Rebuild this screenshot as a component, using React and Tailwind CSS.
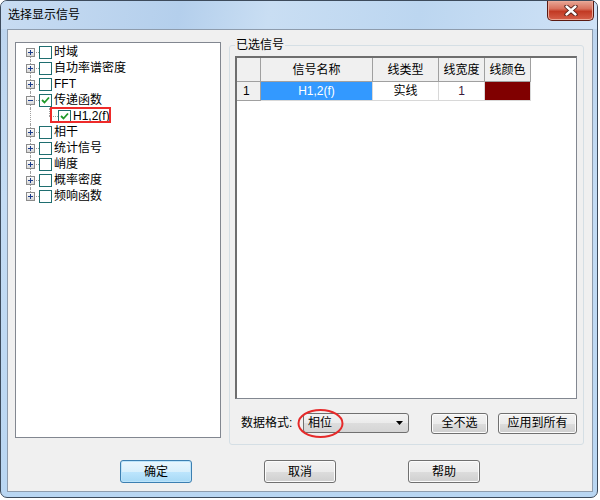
import React from 'react';

const FONT = "font-['Liberation_Sans','Noto_Sans_CJK_SC',sans-serif]";
const DOT = 'border-dotted border-[#a0a0a0]';

const tree = [
  { label: '时域' },
  { label: '自功率谱密度' },
  { label: 'FFT' },
  { label: '传递函数', open: true, checked: true, children: [{ label: 'H1,2(f)', checked: true, marked: true }] },
  { label: '相干' },
  { label: '统计信号' },
  { label: '峭度' },
  { label: '概率密度' },
  { label: '频响函数' },
];

const Expander = ({ open }) => (
  <svg className="absolute left-[5px] top-[4px]" width="9" height="9" viewBox="0 0 9 9">
    <defs>
      <linearGradient id="exg" x1="0" y1="0" x2="0" y2="1">
        <stop offset="0" stopColor="#ffffff" />
        <stop offset="1" stopColor="#d4d4d4" />
      </linearGradient>
    </defs>
    <rect x="0.5" y="0.5" width="8" height="8" fill="url(#exg)" stroke="#8c8c8c" />
    <line x1="2" y1="4.5" x2="7" y2="4.5" stroke="#1c3c8c" />
    {!open && <line x1="4.5" y1="2" x2="4.5" y2="7" stroke="#1c3c8c" />}
  </svg>
);

const Check = ({ checked }) => (
  <div className="w-[13px] h-[13px] shrink-0 border border-[#1f6e70] bg-white flex items-center justify-center">
    {checked && (
      <svg width="9" height="8" viewBox="0 0 9 8">
        <polyline points="1,4 3.5,6.5 8,1.5" fill="none" stroke="#1f9a2a" strokeWidth="1.8" />
      </svg>
    )}
  </div>
);

// one row of the tree: gutter with dotted lines, checkbox, label
const TreeRow = ({ item, first, last }) => (
  <>
    <div className="flex items-center h-[16px]">
      <div className="relative w-[18px] h-full shrink-0">
        {!first && <div className={`absolute left-[9px] top-0 h-[8px] border-l ${DOT}`} />}
        {!last && <div className={`absolute left-[9px] top-[8px] bottom-0 border-l ${DOT}`} />}
        <div className={`absolute left-[9px] right-0 top-[8px] border-t ${DOT}`} />
        <Expander open={item.open} />
      </div>
      <Check checked={item.checked} />
      <span className="ml-[2px] text-[12px] leading-[16px] text-black whitespace-nowrap">{item.label}</span>
    </div>
    {item.open &&
      item.children.map((c, i) => (
        <div key={i} className="relative flex items-center h-[16px]">
          <div className="relative w-[18px] h-full shrink-0">
            {!last && <div className={`absolute left-[9px] top-0 bottom-0 border-l ${DOT}`} />}
          </div>
          <div className="relative w-[19px] h-full shrink-0">
            <div className={`absolute left-[10px] top-0 h-[8px] border-l ${DOT}`} />
            <div className={`absolute left-[10px] right-0 top-[8px] border-t ${DOT}`} />
          </div>
          <Check checked={c.checked} />
          <span className="ml-[2px] text-[12px] leading-[16px] text-black whitespace-nowrap">{c.label}</span>
          {c.marked && (
            <div className="absolute left-[29px] top-[-1px] w-[61px] h-[16px] border-2 border-[#ee2a2a]" />
          )}
        </div>
      ))}
  </>
);

const cols = [
  { w: 'w-[24px]', head: '' },
  { w: 'w-[112px]', head: '信号名称' },
  { w: 'w-[66px]', head: '线类型' },
  { w: 'w-[46px]', head: '线宽度' },
  { w: 'w-[46px]', head: '线颜色' },
];

const Button = ({ children, className = '', primary }) => (
  <div
    className={`h-[21px] flex items-center justify-center rounded-[3px] border text-[12px] text-black ${
      primary
        ? 'border-[#3c7fb1] bg-[linear-gradient(to_bottom,#eaf6fd_0%,#d9f0fc_50%,#bee6fd_50%,#a7d9f5_100%)] shadow-[inset_0_0_0_1px_#bde4fa]'
        : 'border-[#707070] bg-[linear-gradient(to_bottom,#f2f2f2_0%,#ebebeb_50%,#dddddd_50%,#cfcfcf_100%)] shadow-[inset_0_0_0_1px_#fcfcfc]'
    } ${className}`}
  >
    {children}
  </div>
);

export default function App() {
  return (
    <div className={`w-[600px] h-[500px] bg-white overflow-hidden ${FONT}`}>
      <div className="w-[598px] h-[498px] flex flex-col rounded-[7px] border border-[#3d4b5c] bg-[linear-gradient(to_bottom,#bcd4ee,#c4dcf4_40%,#b9d6f2)]">
        {/* title bar */}
        <div className="h-[28px] flex items-start shrink-0 rounded-t-[6px] bg-[linear-gradient(100deg,#c8dcf2_0%,#b4cfec_30%,#c9def3_45%,#bcd6f0_70%,#cfe2f6_100%)]">
          <span className="ml-[7px] mt-[6px] text-[12px] leading-[16px] text-black">选择显示信号</span>
          <div className="ml-auto mr-[3px] w-[47px] h-[20px] rounded-b-[5px] border border-t-0 border-[#5a1a12] flex items-center justify-center bg-[linear-gradient(to_bottom,#e8a796_0%,#d9725e_40%,#c23a24_55%,#d6604a_100%)] shadow-[inset_0_0_0_1px_#eba897]">
            <svg width="14" height="11" viewBox="0 0 14 11">
              <path d="M2.5 1.5 L11.5 9.5 M11.5 1.5 L2.5 9.5" stroke="#4a1a14" strokeWidth="4.2" strokeLinecap="round" />
              <path d="M2.5 1.5 L11.5 9.5 M11.5 1.5 L2.5 9.5" stroke="#ffffff" strokeWidth="2.4" strokeLinecap="round" />
            </svg>
          </div>
        </div>

        {/* client area */}
        <div className="flex-1 ml-[6px] mr-[4px] mb-[5px] border border-[#8e9cad] bg-[#f0f0f0] flex flex-col pt-[8px]">
          <div className="flex items-start">
            {/* tree */}
            <div className="ml-[7px] mt-[4px] w-[206px] h-[396px] border border-[#828790] bg-white pt-[1px] pl-[5px] shrink-0">
              {tree.map((it, i) => (
                <TreeRow key={i} item={it} first={i === 0} last={i === tree.length - 1} />
              ))}
            </div>

            {/* selected signals group */}
            <fieldset className="ml-[8px] w-[355px] h-[407px] border border-[#d5dfe5] rounded-[3px] px-[5px] pt-[4px] shrink-0 min-w-0">
              <legend className="ml-0 px-[1px] text-[12px] leading-[14px] text-black">已选信号</legend>
              <div className="w-[342px] h-[343px] border border-[#828790] border-t-2 border-l-2 border-t-[#6e6e6e] border-l-[#6e6e6e] bg-white">
                <div className="flex h-[24px]">
                  {cols.map((c, i) => (
                    <div
                      key={i}
                      className={`${c.w} h-full shrink-0 bg-[#f0f0f0] border-r border-b border-[#a0a0a0] flex items-center justify-center text-[12px] text-black`}
                    >
                      {c.head}
                    </div>
                  ))}
                </div>
                <div className="flex h-[19px] text-[12px]">
                  <div className="w-[24px] h-full shrink-0 bg-[#f0f0f0] border-r border-b border-[#a0a0a0] flex items-center pl-[6px] text-black">
                    1
                  </div>
                  <div className="w-[112px] h-full shrink-0 bg-[#3399ff] border-r border-b border-[#d8d8d8] flex items-center justify-center text-white">
                    H1,2(f)
                  </div>
                  <div className="w-[66px] h-full shrink-0 border-r border-b border-[#d8d8d8] flex items-center justify-center text-black">
                    实线
                  </div>
                  <div className="w-[46px] h-full shrink-0 border-r border-b border-[#d8d8d8] flex items-center justify-center text-[#3a1a3a]">
                    1
                  </div>
                  <div className="w-[46px] h-full shrink-0 border-r border-b border-[#d8d8d8] bg-[#800000]" />
                </div>
              </div>

              <div className="flex items-center mt-[13px] h-[22px]">
                <span className="ml-[6px] w-[62px] shrink-0 text-[12px] text-black">数据格式:</span>
                <div className="relative w-[106px] h-[20px] shrink-0 rounded-[3px] border border-[#707070] bg-[linear-gradient(to_bottom,#f3f3f3_0%,#ebebeb_50%,#dddddd_50%,#d5d5d5_100%)] flex items-center pl-[4px] text-[12px] text-black">
                  相位
                  <svg className="ml-auto mr-[5px]" width="7" height="4" viewBox="0 0 7 4">
                    <polygon points="0,0 7,0 3.5,4" fill="#000" />
                  </svg>
                  <svg className="absolute left-[-7px] top-[-6px]" width="47" height="31" viewBox="0 0 47 31">
                    <ellipse cx="23.5" cy="15.5" rx="22" ry="13.5" fill="none" stroke="#e62a2a" strokeWidth="2" />
                  </svg>
                </div>
                <Button className="ml-[22px] w-[57px] shrink-0">全不选</Button>
                <Button className="ml-[10px] w-[79px] shrink-0">应用到所有</Button>
              </div>
            </fieldset>
          </div>

          <div className="flex mt-[15px] ml-[112px] gap-[72px]">
            <Button primary className="w-[72px] h-[23px]">确定</Button>
            <Button className="w-[72px] h-[23px]">取消</Button>
            <Button className="w-[72px] h-[23px]">帮助</Button>
          </div>
        </div>
      </div>
    </div>
  );
}
